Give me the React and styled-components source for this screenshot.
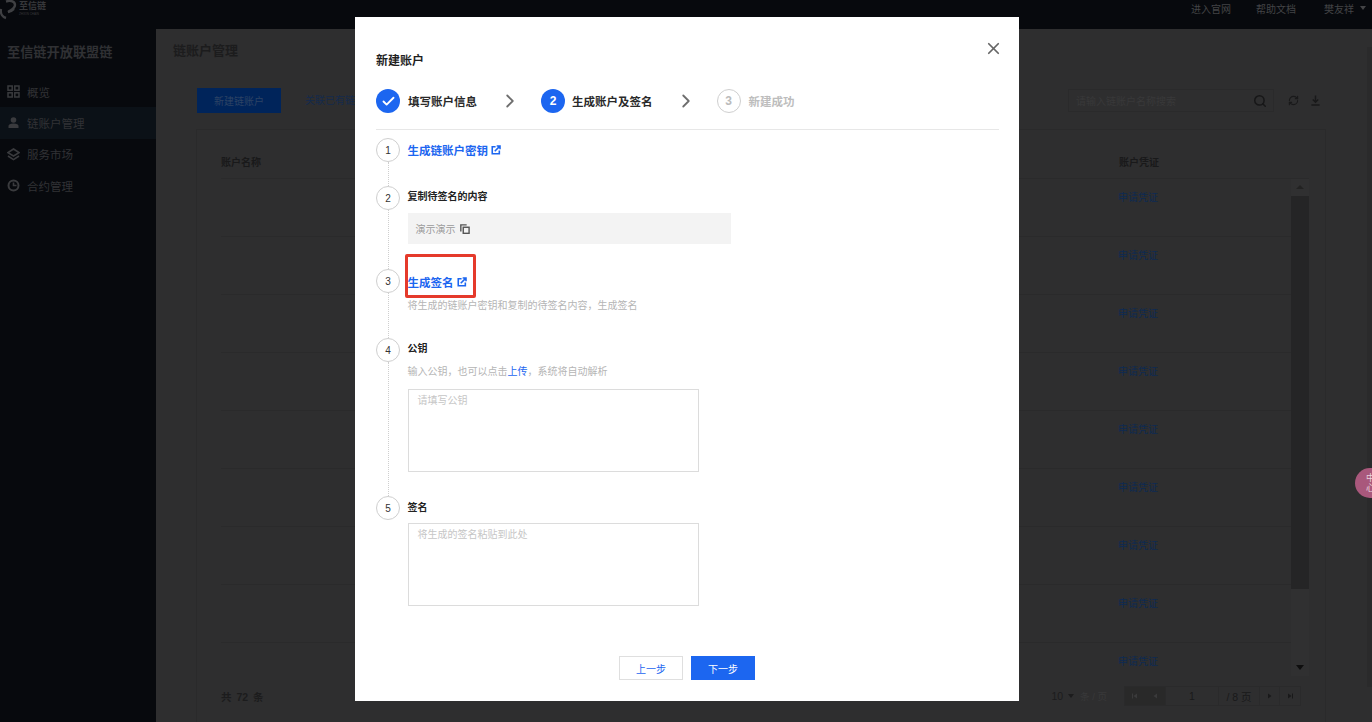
import React from 'react';
import styled, { createGlobalStyle } from 'styled-components';
import { Check, ChevronRight, X, Search, RefreshCw } from 'lucide-react';

const FONT = '"Liberation Sans", "Noto Sans CJK SC", sans-serif';

const GlobalStyle = createGlobalStyle`
  html, body {
    margin: 0;
    padding: 0;
    height: 100%;
    background: #2e2e2f;
    font-family: ${FONT};
    overflow: hidden;
  }
  * { box-sizing: border-box; }
`;

const Page = styled.div`
  width: 1372px;
  height: 722px;
  display: flex;
  flex-direction: column;
  overflow: hidden;
`;

const TopBar = styled.div`
  height: 29px;
  flex: none;
  background: #07090d;
  display: flex;
  align-items: flex-start;
`;

const Logo = styled.div`
  width: 60px;
  height: 20px;
  display: flex;
`;

const LogoText = styled.div`
  margin-top: 1px;
  margin-left: -1px;
  display: flex;
  flex-direction: column;
  font-size: 9px;
  line-height: 11px;
  font-weight: 700;
  color: #37383b;
  span {
    font-size: 3px;
    line-height: 4px;
    font-weight: 400;
    white-space: nowrap;
  }
`;

const TopLinks = styled.div`
  margin-left: auto;
  display: flex;
  align-items: center;
  height: 16px;
  padding-right: 6px;
  font-size: 10px;
  color: #434446;
`;

const TopLink = styled.span`
  margin-left: ${props => props.gap}px;
`;

const Caret = styled.i`
  display: inline-block;
  margin-left: ${props => props.gap || 5}px;
  border-left: 3px solid transparent;
  border-right: 3px solid transparent;
  border-top: 4px solid ${props => props.color || '#434446'};
`;

const Body = styled.div`
  flex: 1;
  display: flex;
  min-height: 0;
`;

const Sidebar = styled.div`
  width: 156px;
  flex: none;
  background: #07090d;
`;

const SideTitle = styled.div`
  padding: 16px 0 0 7px;
  height: 47px;
  font-size: 13.2px;
  line-height: 16px;
  font-weight: 700;
  color: #303134;
`;

const SideItem = styled.div`
  height: 31.3px;
  display: flex;
  align-items: center;
  gap: 7px;
  padding-left: 7px;
  font-size: 11.5px;
  color: #313235;
  background: ${props => (props.active ? '#0b1117' : 'transparent')};
  svg {
    width: 13px;
    height: 13px;
    flex: none;
    color: #3a3b3e;
  }
`;

const Main = styled.div`
  flex: 1;
  position: relative;
  background: #2e2e2f;
  min-width: 0;
`;

const MainTitle = styled.div`
  height: 59px;
  padding: 14px 0 0 17px;
  font-size: 13px;
  line-height: 16px;
  font-weight: 700;
  color: #1c1c1d;
`;

const Toolbar = styled.div`
  width: 1129px;
  margin-left: 41px;
  display: flex;
  align-items: center;
  height: 25px;
`;

const PrimaryDark = styled.div`
  width: 84px;
  height: 25px;
  background: #00245a;
  color: #2d4365;
  font-size: 10px;
  display: flex;
  align-items: center;
  justify-content: center;
`;

const PlainDark = styled.div`
  width: 100px;
  height: 25px;
  margin-left: 8px;
  padding-left: 16px;
  font-size: 10px;
  line-height: 25px;
  color: #142a4c;
  white-space: nowrap;
`;

const SearchBox = styled.div`
  margin-left: auto;
  width: 206px;
  height: 23px;
  border: 1px solid #2a2a2b;
  padding: 0 6px 0 7px;
  display: flex;
  align-items: center;
  justify-content: space-between;
  font-size: 10px;
  color: #39393a;
  svg {
    width: 14px;
    height: 14px;
    color: #171718;
  }
`;

const ToolIcons = styled.div`
  width: 52px;
  padding-left: 14px;
  display: flex;
  gap: 11px;
  align-items: center;
  color: #19191a;
  svg {
    width: 11px;
    height: 11px;
  }
`;

const Card = styled.div`
  width: 1130px;
  margin: 16px 0 0 40px;
  height: 640px;
  border: 1px solid #2a2a2b;
  padding: 15px 16px 0 24px;
`;

const TableHead = styled.div`
  height: 34px;
  display: flex;
  font-size: 10px;
  line-height: 36px;
  color: #19191a;
  font-weight: 700;
  border-bottom: 1px solid #2a2a2b;
`;

const CredHead = styled.div`
  margin-left: auto;
  width: 190px;
`;

const TableBody = styled.div`
  display: flex;
  height: 497px;
  overflow: hidden;
`;

const Rows = styled.div`
  flex: 1;
`;

const Row = styled.div`
  height: 58px;
  padding-top: 12px;
  padding-left: 897px;
  font-size: 10px;
  line-height: 14px;
  color: #0d2a52;
  border-bottom: 1px solid #2a2a2b;
`;

const ScrollBar = styled.div`
  width: 18px;
  flex: none;
  display: flex;
  flex-direction: column;
  align-items: center;
  background: #303031;
  margin-top: -1px;
`;

const ScrollArrow = styled.div`
  height: 18px;
  flex: none;
  display: flex;
  align-items: center;
  justify-content: center;
  &::after {
    content: '';
    border-left: 4px solid transparent;
    border-right: 4px solid transparent;
    ${props => (props.up ? 'border-bottom: 4px solid #222;' : 'border-top: 5px solid #0e0e0e;')}
  }
`;

const ScrollThumb = styled.div`
  width: 100%;
  height: 393px;
  background: #252526;
`;

const ScrollGap = styled.div`
  flex: 1;
`;

const Pager = styled.div`
  height: 40px;
  display: flex;
  align-items: center;
  font-size: 10.5px;
  color: #1c1c1d;
`;

const Total = styled.div`
  font-weight: 700;
  word-spacing: 2px;
`;

const PageSize = styled.div`
  margin-left: auto;
  display: flex;
  align-items: center;
  color: #1c1c1d;
`;

const PageHint = styled.span`
  margin-left: 6px;
  color: #39393a;
  font-size: 9.5px;
`;

const PagerBox = styled.div`
  margin-left: 17px;
  margin-right: 8px;
  display: flex;
  height: 20px;
  align-items: center;
  border: 1px solid #2a2a2b;
`;

const PagerBtn = styled.div`
  width: ${props => props.w}px;
  height: 100%;
  display: flex;
  align-items: center;
  justify-content: center;
  background: ${props => (props.off ? '#292929' : 'transparent')};
  color: ${props => (props.off ? '#3a3a3b' : '#19191a')};
  font-size: 10.5px;
  border-right: ${props => (props.line ? '1px solid #2a2a2b' : 'none')};
  svg {
    width: 8px;
    height: 8px;
  }
`;

const PageScroll = styled.div`
  position: absolute;
  right: 0;
  top: 18px;
  width: 5px;
  height: 640px;
  background: #2a2a2b;
`;

const LangBall = styled.div`
  position: absolute;
  right: -13px;
  top: 439px;
  width: 30px;
  height: 30px;
  border-radius: 50%;
  background: #a9587c;
  color: #e8d4dd;
  font-size: 9px;
  line-height: 10px;
  padding: 5px 0 0 11px;
`;

const Overlay = styled.div`
  position: fixed;
  inset: 0;
  padding: 17px 0 0 355px;
`;

const Modal = styled.div`
  position: relative;
  width: 664px;
  height: 684px;
  background: #fff;
  padding: 36px 20px 0 21px;
`;

const CloseBtn = styled.div`
  position: absolute;
  top: 22px;
  right: 16px;
  color: #666;
  svg {
    display: block;
    width: 19px;
    height: 19px;
  }
`;

const ModalTitle = styled.div`
  font-size: 12px;
  line-height: 16px;
  font-weight: 700;
  color: #1f1f1f;
`;

const Steps = styled.div`
  margin-top: 20px;
  height: 24px;
  box-sizing: content-box;
  padding-bottom: 16px;
  display: flex;
  align-items: center;
  border-bottom: 1px solid #e7e7e7;
`;

const StepDot = styled.div`
  width: 24px;
  height: 24px;
  border-radius: 50%;
  flex: none;
  display: flex;
  align-items: center;
  justify-content: center;
  font-size: 12px;
  font-weight: 700;
  background: ${props => (props.muted ? '#fff' : '#1c66f0')};
  color: ${props => (props.muted ? '#bbb' : '#fff')};
  border: ${props => (props.muted ? '1px solid #cfcfcf' : 'none')};
  svg {
    width: 15px;
    height: 15px;
  }
`;

const StepName = styled.div`
  margin-left: ${props => props.gap || 8}px;
  font-size: 11.5px;
  font-weight: 700;
  white-space: nowrap;
  color: ${props => (props.muted ? '#bdbdbd' : '#2a2a2a')};
`;

const StepArrow = styled.div`
  width: ${props => props.w}px;
  padding-left: 2px;
  display: flex;
  justify-content: center;
  color: #6e6e6e;
  flex: none;
  svg {
    width: 22px;
    height: 22px;
  }
`;

const Flow = styled.div`
  margin-top: 8px;
`;

const FlowItem = styled.div`
  position: relative;
  display: flex;
  height: ${props => props.h}px;
  &::before {
    content: ${props => (props.last ? 'none' : "''")};
    position: absolute;
    left: 12px;
    top: 24px;
    bottom: 0;
    border-left: 1px dotted #cfcfcf;
  }
`;

const FlowNum = styled.div`
  width: 24px;
  height: 24px;
  flex: none;
  border-radius: 50%;
  border: 1px solid #cfcfcf;
  display: flex;
  align-items: center;
  justify-content: center;
  font-size: 10px;
  color: #333;
  background: #fff;
`;

const FlowContent = styled.div`
  margin-left: 7.5px;
  flex: 1;
  min-width: 0;
`;

const LinkTitle = styled.div`
  position: relative;
  display: inline-flex;
  align-items: center;
  height: 16px;
  margin-top: ${props => props.top || 0}px;
  font-size: 11.5px;
  font-weight: 700;
  color: #1c66f0;
  svg {
    width: 10px;
    height: 10px;
    margin-left: 3px;
  }
`;

const RedMark = styled.div`
  position: absolute;
  left: -3px;
  top: -20px;
  width: 71px;
  height: 44px;
  border: 3px solid #e53a2b;
  border-radius: 2px;
`;

const Label = styled.div`
  font-size: 10px;
  line-height: 14px;
  margin-top: ${props => props.top || 0}px;
  font-weight: 700;
  color: #222;
`;

const SignBox = styled.div`
  margin-top: 9px;
  width: 323px;
  height: 31px;
  background: #f3f3f3;
  padding-left: 8px;
  display: flex;
  align-items: center;
  font-size: 10px;
  color: #9a9a9a;
  svg {
    width: 10px;
    height: 10px;
    margin-left: 4px;
    color: #555;
  }
`;

const Hint = styled.div`
  font-size: 10px;
  line-height: 14px;
  margin-top: ${props => props.top || 0}px;
  color: #b5b5b5;
`;

const HintLink = styled.span`
  color: #1c66f0;
`;

const TextBox = styled.div`
  width: 291px;
  height: 83px;
  margin-top: ${props => props.top}px;
  border: 1px solid #dcdcdc;
  padding: 4px 9px;
  font-size: 10px;
  line-height: 14px;
  color: #c6c6c6;
`;

const Footer = styled.div`
  margin-top: 51px;
  display: flex;
  justify-content: center;
  gap: 8px;
  padding-right: 1px;
`;

const FootBtn = styled.div`
  width: 64px;
  height: 24px;
  display: flex;
  align-items: center;
  justify-content: center;
  font-size: 10px;
  background: ${props => (props.primary ? '#1c66f0' : '#fff')};
  color: ${props => (props.primary ? '#fff' : '#1c66f0')};
  border: 1px solid ${props => (props.primary ? '#1c66f0' : '#dfdfdf')};
`;

const ExternalIcon = () => (
  <svg viewBox="0 0 12 12" fill="none" stroke="currentColor" strokeWidth="1.9">
    <path d="M5.5 2H1.5v8.5H10V6.5" />
    <path d="M4.5 7.5L10 2M6.8 1.2h4v4" />
  </svg>
);

const CopyIcon = () => (
  <svg viewBox="0 0 12 12" fill="none" stroke="currentColor" strokeWidth="1.7">
    <path d="M1 9V1h7" />
    <rect x="3.9" y="3.9" width="7" height="7.3" />
  </svg>
);

const GridIcon = () => (
  <svg viewBox="0 0 13 13" fill="none" stroke="currentColor" strokeWidth="1.5">
    <rect x="1" y="1" width="4.2" height="4.2" />
    <rect x="7.8" y="1" width="4.2" height="4.2" />
    <rect x="1" y="7.8" width="4.2" height="4.2" />
    <rect x="7.8" y="7.8" width="4.2" height="4.2" />
  </svg>
);

const UserIcon = () => (
  <svg viewBox="0 0 13 13" fill="currentColor">
    <circle cx="6.5" cy="4" r="2.8" />
    <path d="M1.5 12V10c0-1.5 1.6-2.4 5-2.4s5 .9 5 2.4v2z" />
  </svg>
);

const LayersIcon = () => (
  <svg viewBox="0 0 13 13" fill="none" stroke="currentColor" strokeWidth="1.6">
    <path d="M6.5 1L12 4.6 6.5 8 1 4.6z" />
    <path d="M1 8l5.5 3.6L12 8" />
  </svg>
);

const PieIcon = () => (
  <svg viewBox="0 0 13 13" fill="none" stroke="currentColor" strokeWidth="2">
    <circle cx="6.5" cy="6.5" r="5" />
    <path d="M6.5 3.5v3h3" strokeWidth="1.6" />
  </svg>
);

const DownloadIcon = () => (
  <svg viewBox="0 0 12 12" fill="none" stroke="currentColor" strokeWidth="1.6">
    <path d="M6 0.5v7M3 5l3 3 3-3M1.5 11h9" />
  </svg>
);

const PagerArrow = ({ back, edge }) => (
  <svg viewBox="0 0 8 8" fill="currentColor">
    <g transform={back ? 'rotate(180 4 4)' : undefined}>
      <path d="M2 1.5L5.5 4 2 6.5z" />
      {edge && <rect x="6" y="1.5" width="1" height="5" />}
    </g>
  </svg>
);

const LogoMark = () => (
  <svg width="20" height="20" viewBox="0 0 20 20" fill="none" stroke="#3f4043" strokeWidth="2.4">
    <path d="M6 1.5c5-1.5 9 0 9 3.5s-4 5-7 7" />
    <path d="M1 9c-1 5 2 8 5 9M8 12c3 0 4-1 6-3" />
  </svg>
);

const rows = Array.from({ length: 9 }, (_, i) => i);

export default function App() {
  return (
    <>
      <GlobalStyle />
      <Page>
        <TopBar>
          <Logo>
            <LogoMark />
            <LogoText>
              至信链
              <span>ZHIXIN CHAIN</span>
            </LogoText>
          </Logo>
          <TopLinks>
            <TopLink gap={0}>进入官网</TopLink>
            <TopLink gap={25}>帮助文档</TopLink>
            <TopLink gap={28}>樊友祥</TopLink>
            <Caret gap={6} />
          </TopLinks>
        </TopBar>
        <Body>
          <Sidebar>
            <SideTitle>至信链开放联盟链</SideTitle>
            <SideItem><GridIcon />概览</SideItem>
            <SideItem active><UserIcon />链账户管理</SideItem>
            <SideItem><LayersIcon />服务市场</SideItem>
            <SideItem><PieIcon />合约管理</SideItem>
          </Sidebar>
          <Main>
            <MainTitle>链账户管理</MainTitle>
            <Toolbar>
              <PrimaryDark>新建链账户</PrimaryDark>
              <PlainDark>关联已有链账户</PlainDark>
              <SearchBox>
                请输入链账户名称搜索
                <Search strokeWidth={2.6} />
              </SearchBox>
              <ToolIcons>
                <RefreshCw strokeWidth={2.4} />
                <DownloadIcon />
              </ToolIcons>
            </Toolbar>
            <Card>
              <TableHead>
                账户名称
                <CredHead>账户凭证</CredHead>
              </TableHead>
              <TableBody>
                <Rows>
                  {rows.map(i => (
                    <Row key={i}>申请凭证</Row>
                  ))}
                </Rows>
                <ScrollBar>
                  <ScrollArrow up />
                  <ScrollThumb />
                  <ScrollGap />
                  <ScrollArrow />
                </ScrollBar>
              </TableBody>
              <Pager>
                <Total>共 72 条</Total>
                <PageSize>
                  10
                  <Caret gap={5} color="#1c1c1d" />
                  <PageHint>条 / 页</PageHint>
                </PageSize>
                <PagerBox>
                  <PagerBtn w={20} off><PagerArrow back edge /></PagerBtn>
                  <PagerBtn w={21} off line><PagerArrow back /></PagerBtn>
                  <PagerBtn w={53} line>1</PagerBtn>
                  <PagerBtn w={41} line>/ 8 页</PagerBtn>
                  <PagerBtn w={20} line><PagerArrow /></PagerBtn>
                  <PagerBtn w={20}><PagerArrow edge /></PagerBtn>
                </PagerBox>
              </Pager>
            </Card>
            <PageScroll />
            <LangBall>中<br />心</LangBall>
          </Main>
        </Body>
      </Page>
      <Overlay>
        <Modal>
          <CloseBtn><X strokeWidth={2.2} /></CloseBtn>
          <ModalTitle>新建账户</ModalTitle>
          <Steps>
            <StepDot><Check strokeWidth={3} /></StepDot>
            <StepName>填写账户信息</StepName>
            <StepArrow w={64}><ChevronRight /></StepArrow>
            <StepDot>2</StepDot>
            <StepName gap={7}>生成账户及签名</StepName>
            <StepArrow w={64}><ChevronRight /></StepArrow>
            <StepDot muted>3</StepDot>
            <StepName muted>新建成功</StepName>
          </Steps>
          <Flow>
            <FlowItem h={48}>
              <FlowNum>1</FlowNum>
              <FlowContent>
                <LinkTitle top={4}>生成链账户密钥<ExternalIcon /></LinkTitle>
              </FlowContent>
            </FlowItem>
            <FlowItem h={83}>
              <FlowNum>2</FlowNum>
              <FlowContent>
                <Label top={4}>复制待签名的内容</Label>
                <SignBox>演示演示<CopyIcon /></SignBox>
              </FlowContent>
            </FlowItem>
            <FlowItem h={69}>
              <FlowNum>3</FlowNum>
              <FlowContent>
                <LinkTitle top={5}>
                  生成签名<ExternalIcon />
                  <RedMark />
                </LinkTitle>
                <Hint top={8}>将生成的链账户密钥和复制的待签名内容，生成签名</Hint>
              </FlowContent>
            </FlowItem>
            <FlowItem h={158}>
              <FlowNum>4</FlowNum>
              <FlowContent>
                <Label top={4}>公钥</Label>
                <Hint top={9}>输入公钥，也可以点击<HintLink>上传</HintLink>，系统将自动解析</Hint>
                <TextBox top={10}>请填写公钥</TextBox>
              </FlowContent>
            </FlowItem>
            <FlowItem h={109} last>
              <FlowNum>5</FlowNum>
              <FlowContent>
                <Label top={5}>签名</Label>
                <TextBox top={8}>将生成的签名粘贴到此处</TextBox>
              </FlowContent>
            </FlowItem>
          </Flow>
          <Footer>
            <FootBtn>上一步</FootBtn>
            <FootBtn primary>下一步</FootBtn>
          </Footer>
        </Modal>
      </Overlay>
    </>
  );
}
